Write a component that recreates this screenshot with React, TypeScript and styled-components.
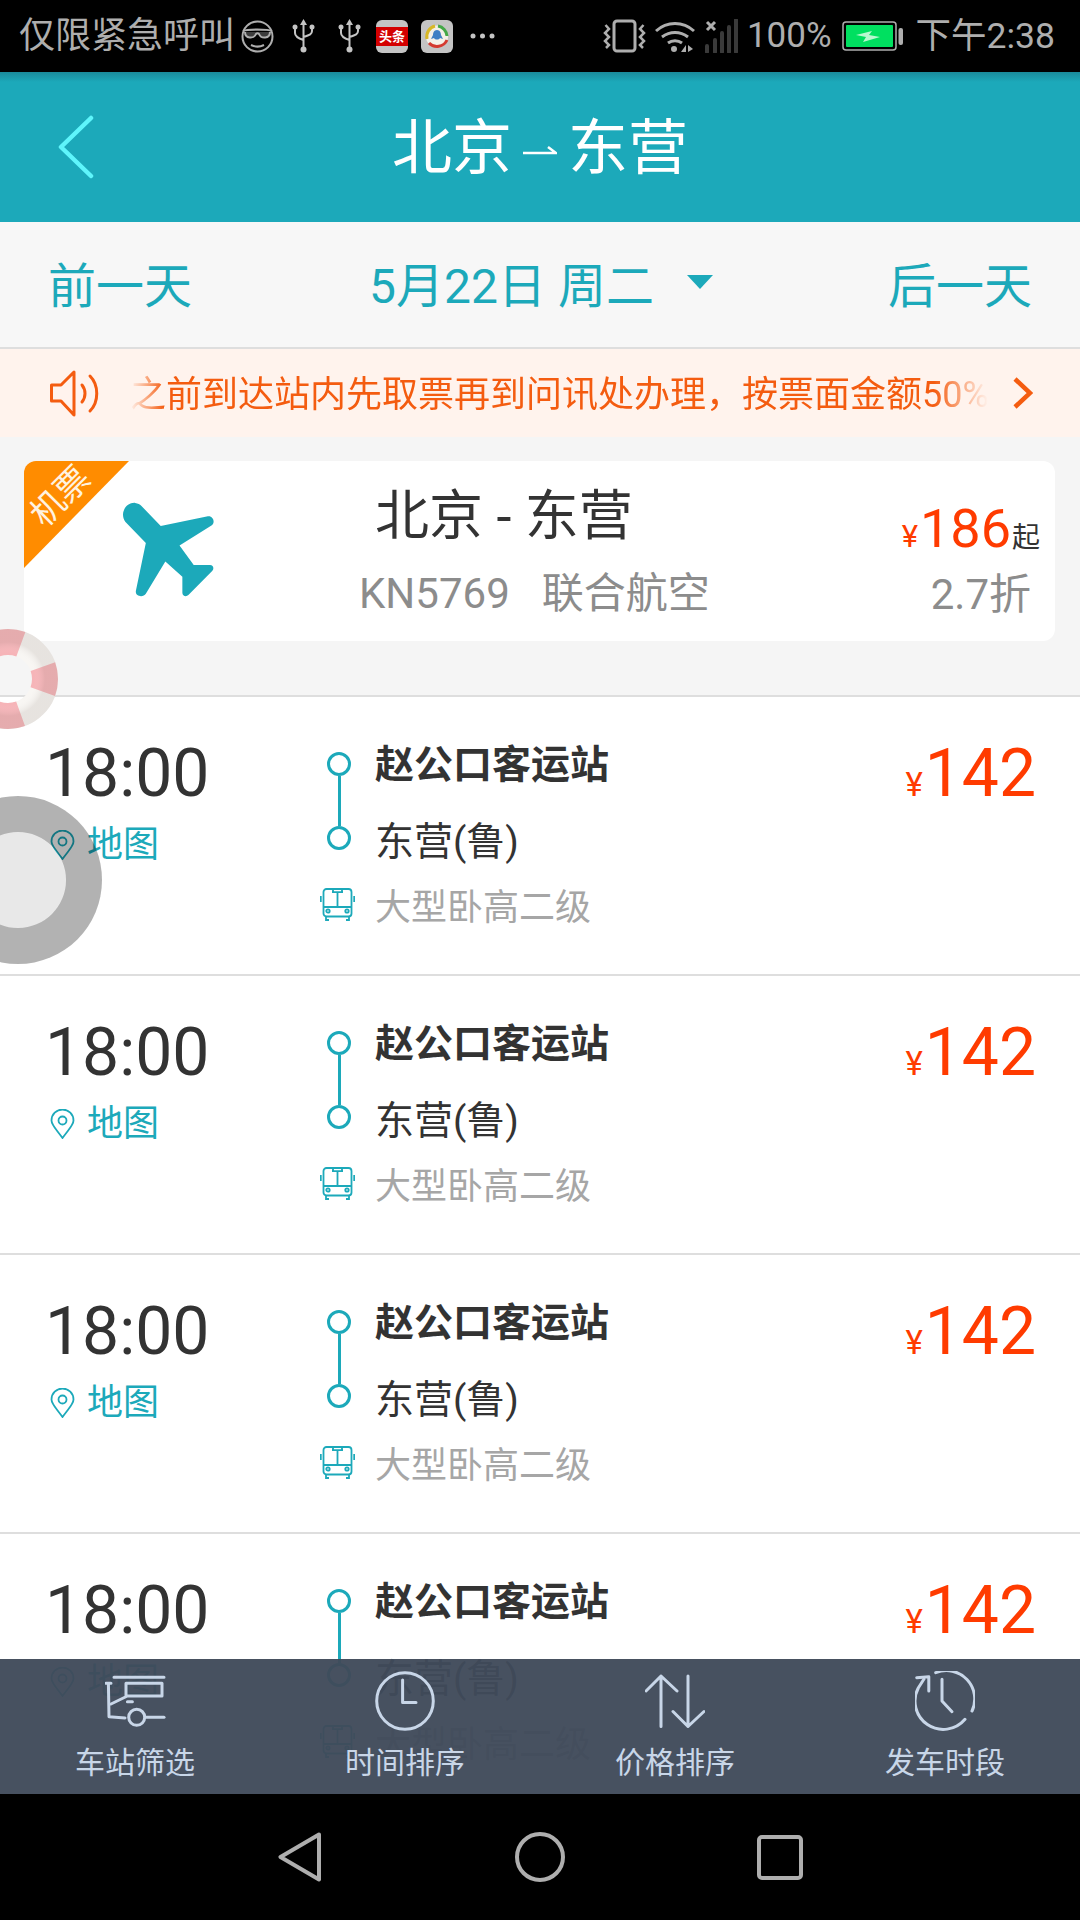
import styled, { createGlobalStyle } from "styled-components";

const TEAL = "#1ca9ba";
const RED = "#ff3b00";
const ORANGE = "#f45c10";
const FONT = `Roboto, "Noto Sans CJK SC", sans-serif`;

const GlobalStyle = createGlobalStyle`
  html, body {
    margin: 0;
    padding: 0;
    background: #000;
    font-family: ${FONT};
  }
`;

const Page = styled.div`
  position: relative;
  width: 1080px;
  height: 1920px;
  display: flex;
  flex-direction: column;
  overflow: hidden;
  background: #fff;
`;

const StatusBar = styled.div`
  height: 72px;
  flex: none;
  display: flex;
  align-items: center;
  justify-content: space-between;
  padding: 0 25px 0 19px;
  background: #000;
  color: #aeaeae;
  font-size: 36px;
`;

const StatusGroup = styled.div`
  display: flex;
  align-items: center;
`;

const StatusText = styled.span<{ $gap?: number; $size?: number }>`
  margin-left: ${({ $gap }) => $gap ?? 0}px;
  font-size: ${({ $size }) => $size ?? 36}px;
  line-height: 72px;
  white-space: nowrap;
`;

const StatusIcon = styled.svg<{ $gap: number }>`
  display: block;
  flex: none;
  margin-left: ${({ $gap }) => $gap}px;
`;

const AppTile = styled.div<{ $gap: number }>`
  position: relative;
  flex: none;
  width: 32px;
  height: 33px;
  margin-left: ${({ $gap }) => $gap}px;
  border-radius: 6px;
  background: #c4c4c4;
  overflow: hidden;
`;

const TileBand = styled.div`
  position: absolute;
  left: 0;
  right: 0;
  top: 7px;
  height: 19px;
  background: #d40000;
  color: #fff;
  font-size: 13px;
  font-weight: 700;
  line-height: 19px;
  text-align: center;
`;

const Header = styled.header`
  height: 150px;
  flex: none;
  display: grid;
  grid-template-columns: 1fr auto 1fr;
  align-items: center;
  background: linear-gradient(#1a8b9b 0, ${TEAL} 10px);
`;

const BackIcon = styled.svg`
  display: block;
  margin-left: 58px;
`;

const Title = styled.h1`
  margin: 4px 0 0;
  display: flex;
  align-items: center;
  gap: 11px;
  color: #fff;
  font-size: 60px;
  font-weight: 400;
  line-height: 1;
`;

const Content = styled.main`
  position: relative;
  flex: 1;
  min-height: 0;
  overflow: hidden;
  background: #fff;
`;

const DateBar = styled.div`
  box-sizing: border-box;
  height: 127px;
  display: flex;
  align-items: center;
  justify-content: space-between;
  padding: 0 48px 5px;
  background: #f7f7f7;
  border-bottom: 2px solid #dedede;
  color: ${TEAL};
  font-size: 48px;
`;

const DateCenter = styled.div`
  display: flex;
  align-items: center;
  gap: 33px;
  margin-left: 2px;
`;

const Caret = styled.span`
  width: 0;
  height: 0;
  border-left: 13px solid transparent;
  border-right: 13px solid transparent;
  border-top: 14px solid ${TEAL};
  margin-top: -1px;
`;

const Notice = styled.div`
  height: 88px;
  display: flex;
  align-items: center;
  padding: 0 40px 0 50px;
  background: #fff3ed;
  color: ${ORANGE};
`;

const NoticeText = styled.div`
  width: 858px;
  margin-left: 30px;
  overflow: hidden;
  white-space: nowrap;
  font-size: 36px;
  line-height: 88px;
  padding-top: 3px;
  -webkit-mask-image: linear-gradient(90deg, transparent 0, #000 34px, #000 804px, transparent 858px);
  mask-image: linear-gradient(90deg, transparent 0, #000 34px, #000 804px, transparent 858px);
`;

const NoticeArrow = styled.svg`
  display: block;
  margin-left: 25px;
`;

const FlightArea = styled.section`
  box-sizing: border-box;
  height: 260px;
  padding: 24px 25px 0 24px;
  background: #f5f5f5;
  border-bottom: 2px solid #dedede;
`;

const FlightCard = styled.div`
  position: relative;
  height: 180px;
  display: flex;
  border-radius: 12px;
  background: #fff;
  overflow: hidden;
`;

const Ribbon = styled.div`
  position: absolute;
  left: 0;
  top: 0;
  width: 105px;
  height: 107px;
  background: #ff8c00;
  clip-path: polygon(0 0, 100% 0, 0 100%);
`;

const RibbonText = styled.span`
  position: absolute;
  left: 2px;
  top: 18px;
  color: #fff3e0;
  font-size: 34px;
  line-height: 1;
  white-space: nowrap;
  transform: rotate(-45deg);
`;

const Plane = styled.svg`
  flex: none;
  display: block;
  margin: 40px 0 0 97px;
`;

const FlightInfo = styled.div`
  flex: 1;
  margin-left: 144px;
`;

const FlightRoute = styled.div`
  margin: 26px 0 0 16px;
  color: #333;
  font-size: 54px;
  line-height: 60px;
`;

const FlightMeta = styled.div`
  display: flex;
  gap: 32px;
  margin-top: 26px;
  color: #8c8c8c;
  font-size: 42px;
  line-height: 42px;
`;

const FlightFare = styled.div`
  flex: none;
  display: flex;
  flex-direction: column;
  align-items: flex-end;
  padding-right: 15px;
`;

const FarePrice = styled.div`
  margin-top: 38px;
  display: flex;
  align-items: baseline;
  color: ${RED};
  font-size: 54px;
  line-height: 60px;
`;

const Yen = styled.span<{ $size: number }>`
  font-size: ${({ $size }) => $size}px;
  margin-right: 2px;
`;

const FareFrom = styled.span`
  margin-left: 1px;
  color: #333;
  font-size: 28px;
`;

const FareDiscount = styled.div`
  margin: 6px 9px 0 0;
  color: #8c8c8c;
  font-size: 42px;
  line-height: 42px;
`;

const Row = styled.article`
  box-sizing: border-box;
  height: 279px;
  display: flex;
  padding: 0 44px 0 45px;
  border-bottom: 2px solid #dedede;
`;

const TimeColumn = styled.div`
  flex: none;
  width: 275px;
  padding-top: 37px;
`;

const Clock = styled.div`
  color: #333;
  font-size: 66px;
  line-height: 80px;
`;

const MapLink = styled.div`
  display: flex;
  align-items: center;
  gap: 12px;
  margin: 9px 0 0 5px;
  color: ${TEAL};
  font-size: 36px;
  line-height: 44px;
`;

const RouteColumn = styled.div`
  flex: 1;
  padding-top: 30px;
`;

const Stops = styled.div`
  display: flex;
`;

const Track = styled.div`
  flex: none;
  width: 38px;
  margin-right: 17px;
  padding-top: 25px;
  display: flex;
  flex-direction: column;
  align-items: center;
`;

const Dot = styled.span`
  box-sizing: border-box;
  width: 24px;
  height: 24px;
  border: 3px solid ${TEAL};
  border-radius: 50%;
`;

const Connector = styled.span`
  width: 3px;
  height: 50px;
  background: ${TEAL};
`;

const StopName = styled.div<{ $strong?: boolean }>`
  color: #333;
  font-size: 39px;
  font-weight: ${({ $strong }) => ($strong ? 700 : 400)};
  line-height: 77px;
`;

const CoachRow = styled.div`
  display: flex;
  align-items: center;
  height: 52px;
  margin-top: -3px;
  color: #a6a6a6;
  font-size: 36px;
`;

const CoachIcon = styled.svg`
  display: block;
  flex: none;
  margin-right: 20px;
`;

const RowPrice = styled.div`
  flex: none;
  padding-top: 37px;
  display: flex;
  align-items: baseline;
  color: ${RED};
  font-size: 66px;
  line-height: 80px;
`;

const TabBar = styled.nav`
  position: absolute;
  left: 0;
  right: 0;
  bottom: 0;
  height: 135px;
  display: flex;
  background: rgba(64, 74, 90, 0.96);
`;

const Tab = styled.div`
  flex: 1;
  display: flex;
  flex-direction: column;
  align-items: center;
  padding-top: 12px;
  color: #c8d6e8;
  font-size: 30px;
`;

const TabIconBox = styled.div`
  height: 60px;
  display: flex;
  align-items: center;
  justify-content: center;
`;

const TabLabel = styled.span`
  margin-top: 10px;
  line-height: 44px;
`;

const NavBar = styled.div`
  height: 126px;
  flex: none;
  display: flex;
  align-items: center;
  justify-content: center;
  background: #000;
`;

const NavButton = styled.div`
  width: 240px;
  display: flex;
  justify-content: center;
`;

const Lifebuoy = styled.svg`
  position: absolute;
  left: -42px;
  top: 629px;
`;

const AssistRing = styled.div`
  position: absolute;
  left: -66px;
  top: 796px;
  box-sizing: border-box;
  width: 168px;
  height: 168px;
  border: 36px solid rgba(0, 0, 0, 0.3);
  border-radius: 50%;
  background: rgba(0, 0, 0, 0.09);
  background-clip: padding-box;
`;

const SmartGlassesIcon = () => (
  <StatusIcon $gap={5} width="35" height="33" viewBox="0 0 35 33" fill="none" stroke="#aeaeae" strokeWidth="2">
    <circle cx="17.5" cy="16.5" r="15" />
    <path d="M3 11c4-2 25-2 29 0M5 12c0 7 9 7 11 2 1-1 2-1 3 0 2 5 11 5 11-2" fill="#3c3c3c" />
    <path d="M11 25c4 2 9 2 13 0" />
  </StatusIcon>
);

const UsbIcon = ({ gap }: { gap: number }) => (
  <StatusIcon $gap={gap} width="23" height="34" viewBox="0 0 23 34" fill="none" stroke="#c4c4c4" strokeWidth="2">
    <path d="M11.5 3v26M3 9v5c0 3 2 5 8.500 7M20 9v3c0 3-2 4-8.500 6" />
    <path d="M11.500 0l3.500 6h-7z" fill="#c4c4c4" stroke="none" />
    <circle cx="11.500" cy="30.500" r="3" fill="#c4c4c4" stroke="none" />
    <circle cx="3" cy="8" r="2.500" fill="#c4c4c4" stroke="none" />
    <circle cx="20" cy="8" r="2.500" fill="#c4c4c4" stroke="none" />
  </StatusIcon>
);

const DotsIcon = () => (
  <StatusIcon $gap={17} width="25" height="6" viewBox="0 0 25 6" fill="#c4c4c4">
    <circle cx="3" cy="3" r="2.500" />
    <circle cx="12.500" cy="3" r="2.500" />
    <circle cx="22" cy="3" r="2.500" />
  </StatusIcon>
);

const NewsTile = () => (
  <StatusIcon $gap={13} width="32" height="33" viewBox="0 0 32 33" fill="none">
    <rect width="32" height="33" rx="6" fill="#c4c4c4" />
    <circle cx="16" cy="16.500" r="11" fill="#f4f0e8" />
    <path d="M6 19a11 11 0 0 1 8-13" stroke="#d8b828" strokeWidth="3" />
    <path d="M17 6a11 11 0 0 1 9 10" stroke="#44a848" strokeWidth="3" />
    <path d="M26 20a11 11 0 0 1-18 3" stroke="#d43a30" strokeWidth="3" />
    <path d="M16 10c3 0 4 3 4 5l2 4-3-1c-1 2-5 2-6 0l-3 1 2-4c0-2 1-5 4-5z" fill="#3f7fc4" />
  </StatusIcon>
);

const VibrateIcon = () => (
  <StatusIcon $gap={0} width="43" height="34" viewBox="0 0 43 34" fill="none" stroke="#aeaeae" strokeWidth="3">
    <rect x="11" y="2" width="21" height="30" rx="3" />
    <path d="M2.500 6l3.500 4-4 4 4 4-4 4 4 4-3 3M40.500 6l-3.500 4 4 4-4 4 4 4-4 4 3 3" strokeWidth="2.500" />
  </StatusIcon>
);

const WifiIcon = () => (
  <StatusIcon $gap={9} width="40" height="33" viewBox="0 0 40 33" fill="none" stroke="#aeaeae" strokeWidth="3">
    <path d="M1 11c11-10 27-10 38 0M7 17c8-6 18-6 26 0M13 23c4-3 10-3 14 0" />
    <circle cx="19" cy="29" r="3" fill="#aeaeae" stroke="none" />
    <path d="M26 32h5v-7zM33 25v7l5-3z" fill="#aeaeae" stroke="none" />
  </StatusIcon>
);

const SignalIcon = () => (
  <StatusIcon $gap={9} width="35" height="34" viewBox="0 0 35 34" fill="none">
    <path d="M3 3l8 8M11 3l-8 8" stroke="#aeaeae" strokeWidth="3" />
    <path d="M3 27v6M11 21v12M18 14v19M25 8v25M32 1v32" stroke="#3a3a3a" strokeWidth="4" strokeLinecap="round" />
  </StatusIcon>
);

const BatteryIcon = () => (
  <StatusIcon $gap={10} width="61" height="30" viewBox="0 0 61 30" fill="none">
    <rect x="1" y="1" width="53" height="28" rx="3" stroke="#aeaeae" strokeWidth="1.500" />
    <rect x="4" y="4" width="47" height="22" rx="1" fill="#00e060" />
    <path d="M14 14l16-4-3 4 11 2-17 5 3-5z" fill="#b8f8d0" />
    <rect x="56.500" y="7" width="4.500" height="17" rx="2" fill="#aeaeae" />
  </StatusIcon>
);

const PinIcon = () => (
  <svg width="25" height="30" viewBox="0 0 25 30" fill="none" stroke={TEAL} strokeWidth="1.800">
    <path d="M12.500 29C6 20 1.500 16 1.500 11.500a11 11 0 0 1 22 0C23.500 16 19 20 12.500 29z" />
    <circle cx="12.500" cy="11.500" r="4" />
  </svg>
);

const BusIcon = () => (
  <CoachIcon width="35" height="33" viewBox="0 0 35 33" fill="none" stroke={TEAL} strokeWidth="1.800">
    <rect x="3.500" y="1" width="28" height="27.500" rx="3" />
    <path d="M0.800 8v6M34.200 8v6M3.500 19h28M17.500 4v15M12 4.200h11M13 1v3.200M22 1v3.200M6 28.500V32h3M29 28.500V32h-3" />
    <circle cx="8" cy="23" r="1.700" />
    <circle cx="27" cy="23" r="1.700" />
  </CoachIcon>
);

const StationTabIcon = () => (
  <svg width="61" height="52" viewBox="0 0 61 52" fill="none" stroke="#c8d6e8" strokeWidth="3" strokeLinecap="round" strokeLinejoin="round">
    <path d="M9 2.300h50M1 8.300h5M3.400 8.300L4 41.700l16 1.300" />
    <path d="M21 8.300h36V21H21zM21 8.300V21M6 29l16.400-8M22.400 26.700h5" />
    <circle cx="31.700" cy="42.300" r="8" />
    <path d="M40.700 42.300H59" />
  </svg>
);

const ClockTabIcon = () => (
  <svg width="60" height="60" viewBox="0 0 60 60" fill="none" stroke="#c8d6e8" strokeWidth="3" strokeLinecap="round" strokeLinejoin="round">
    <circle cx="30" cy="30" r="28.300" />
    <path d="M27.600 9v22.600H41" />
  </svg>
);

const SortTabIcon = () => (
  <svg width="60" height="54" viewBox="0 0 60 54" fill="none" stroke="#c8d6e8" strokeWidth="3" strokeLinecap="round" strokeLinejoin="round">
    <path d="M16 52.500V2M1 17L16 2l16 15M43 2v50.500M28 37.500l15 15 16-15" />
  </svg>
);

const HistoryTabIcon = () => (
  <svg width="60" height="60" viewBox="0 0 60 60" fill="none" stroke="#c8d6e8" strokeWidth="3" strokeLinecap="round" strokeLinejoin="round">
    <path d="M20.700 1.700A28.300 28.300 0 0 1 57 40M50 48.300A28.300 28.300 0 0 1 3.400 16.700L9 8" />
    <path d="M1.700 6.700L13.800 5.700V20M27 8.300V30l10 10.700" />
  </svg>
);

const rows = ["r1", "r2", "r3", "r4"];

const tabs = [
  { label: "车站筛选", icon: <StationTabIcon /> },
  { label: "时间排序", icon: <ClockTabIcon /> },
  { label: "价格排序", icon: <SortTabIcon /> },
  { label: "发车时段", icon: <HistoryTabIcon /> },
];

export default function App() {
  return (
    <Page>
      <GlobalStyle />
      <StatusBar>
        <StatusGroup>
          <StatusText>仅限紧急呼叫</StatusText>
          <SmartGlassesIcon />
          <UsbIcon gap={17} />
          <UsbIcon gap={23} />
          <AppTile $gap={15}>
            <TileBand>头条</TileBand>
          </AppTile>
          <NewsTile />
          <DotsIcon />
        </StatusGroup>
        <StatusGroup>
          <VibrateIcon />
          <WifiIcon />
          <SignalIcon />
          <StatusText $gap={8} $size={35}>100%</StatusText>
          <BatteryIcon />
          <StatusText $gap={13} $size={35.5}>下午2:38</StatusText>
        </StatusGroup>
      </StatusBar>

      <Header>
        <BackIcon width="36" height="64" viewBox="0 0 36 64" fill="none" stroke="#5ff5fb" strokeWidth="4.500" strokeLinecap="round" strokeLinejoin="round">
          <path d="M33 3L3 32l30 29" />
        </BackIcon>
        <Title>
          <span>北京</span>
          <svg width="34" height="14" viewBox="0 0 34 14" fill="none" stroke="#fff" strokeWidth="2.500">
            <path d="M0 11h33L25 5" />
          </svg>
          <span>东营</span>
        </Title>
      </Header>

      <Content>
        <DateBar>
          <span>前一天</span>
          <DateCenter>
            <span>5月22日 周二</span>
            <Caret />
          </DateCenter>
          <span>后一天</span>
        </DateBar>

        <Notice>
          <svg width="50" height="47" viewBox="0 0 50 47" fill="none" stroke={ORANGE} strokeWidth="3" strokeLinecap="round" strokeLinejoin="round">
            <path d="M1.500 15H11L24 2v43L11 31H1.500z" />
            <path d="M32 15c4 5 4 12 0 17M40 6c9 9 9 26 0 35" />
          </svg>
          <NoticeText>之前到达站内先取票再到问讯处办理，按票面金额50%</NoticeText>
          <NoticeArrow width="20" height="32" viewBox="0 0 20 32" fill="none" stroke={ORANGE} strokeWidth="4.500">
            <path d="M2 2l15 14L2 30" />
          </NoticeArrow>
        </Notice>

        <FlightArea>
          <FlightCard>
            <Ribbon>
              <RibbonText>机票</RibbonText>
            </Ribbon>
            <Plane width="94" height="96" viewBox="355 487 265 270">
              <path
                d="M367 545C350 520 370 490 395 492c8 1 13 4 17 8l55 57 133-27c15-2 22 18 10 26l-90 56 40 55h46c10 0 12 11 6 17l-67 68c-7 6-17 2-17-7v-45l-48-43-55 91c-7 12-31 8-28-8l28-135z"
                fill={TEAL}
              />
            </Plane>
            <FlightInfo>
              <FlightRoute>北京 - 东营</FlightRoute>
              <FlightMeta>
                <span>KN5769</span>
                <span>联合航空</span>
              </FlightMeta>
            </FlightInfo>
            <FlightFare>
              <FarePrice>
                <Yen $size={31}>¥</Yen>
                186
                <FareFrom>起</FareFrom>
              </FarePrice>
              <FareDiscount>2.7折</FareDiscount>
            </FlightFare>
          </FlightCard>
        </FlightArea>

        {rows.map((id) => (
          <Row key={id}>
            <TimeColumn>
              <Clock>18:00</Clock>
              <MapLink>
                <PinIcon />
                <span>地图</span>
              </MapLink>
            </TimeColumn>
            <RouteColumn>
              <Stops>
                <Track>
                  <Dot />
                  <Connector />
                  <Dot />
                </Track>
                <div>
                  <StopName $strong>赵公口客运站</StopName>
                  <StopName>东营(鲁)</StopName>
                </div>
              </Stops>
              <CoachRow>
                <BusIcon />
                <span>大型卧高二级</span>
              </CoachRow>
            </RouteColumn>
            <RowPrice>
              <Yen $size={33}>¥</Yen>
              142
            </RowPrice>
          </Row>
        ))}

        <TabBar>
          {tabs.map((tab) => (
            <Tab key={tab.label}>
              <TabIconBox>{tab.icon}</TabIconBox>
              <TabLabel>{tab.label}</TabLabel>
            </Tab>
          ))}
        </TabBar>
      </Content>

      <NavBar>
        <NavButton>
          <svg width="44" height="50" viewBox="0 0 44 50" fill="none" stroke="#aeaeae" strokeWidth="4" strokeLinejoin="round">
            <path d="M41 2.500L2.500 25 41 47.500z" />
          </svg>
        </NavButton>
        <NavButton>
          <svg width="50" height="50" viewBox="0 0 50 50" fill="none" stroke="#aeaeae" strokeWidth="4">
            <circle cx="25" cy="25" r="23" />
          </svg>
        </NavButton>
        <NavButton>
          <svg width="46" height="45" viewBox="0 0 46 45" fill="none" stroke="#aeaeae" strokeWidth="4">
            <rect x="2" y="2" width="42" height="41" rx="3" />
          </svg>
        </NavButton>
      </NavBar>

      <Lifebuoy width="100" height="100" viewBox="0 0 100 100" fill="none">
        <defs>
          <radialGradient id="buoyShade" cx="50%" cy="50%" r="50%">
            <stop offset="70%" stopColor="#fff" stopOpacity="0" />
            <stop offset="100%" stopColor="#8c8078" stopOpacity="0.16" />
          </radialGradient>
        </defs>
        <circle cx="50" cy="50" r="37" stroke="#f8f6f3" strokeWidth="26" />
        <circle cx="50" cy="50" r="37" stroke="#f6b4b8" strokeWidth="26" strokeDasharray="25.800 32.300" strokeDashoffset="12.900" />
        <circle cx="50" cy="50" r="37" stroke="url(#buoyShade)" strokeWidth="26" />
      </Lifebuoy>
      <AssistRing />
    </Page>
  );
}
